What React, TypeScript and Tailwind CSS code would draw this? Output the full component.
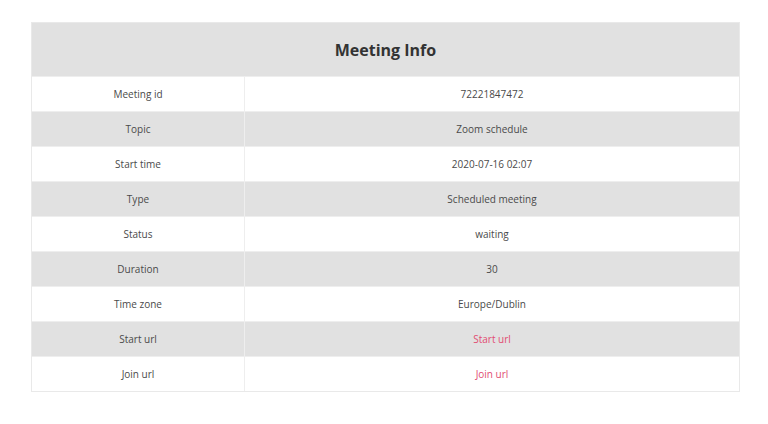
const rows: { label: string; value: string; link?: boolean }[] = [
  { label: "Meeting id", value: "72221847472" },
  { label: "Topic", value: "Zoom schedule" },
  { label: "Start time", value: "2020-07-16 02:07" },
  { label: "Type", value: "Scheduled meeting" },
  { label: "Status", value: "waiting" },
  { label: "Duration", value: "30" },
  { label: "Time zone", value: "Europe/Dublin" },
  { label: "Start url", value: "Start url", link: true },
  { label: "Join url", value: "Join url", link: true },
];

export default function App() {
  return (
    <div
      className="min-h-[424px] bg-white pt-[22px] pl-[31px]"
      style={{ fontFamily: '"Open Sans", "Noto Sans", sans-serif' }}
    >
      <div className="w-[709px] border border-[#e9e9e9] text-[10px] text-[#4a4a4a]">
        <div className="flex h-[53px] items-center justify-center bg-[#e1e1e1]">
          <h1 className="text-[16px] font-bold text-[#333]">Meeting Info</h1>
        </div>
        {rows.map((r, i) => (
          <div
            key={r.label}
            className={`flex h-[35px] border-t border-[#eeeeee] ${
              i % 2 === 1 ? "bg-[#e1e1e1]" : "bg-white"
            }`}
          >
            <div className="flex w-[213px] items-center justify-center border-r border-[#eeeeee]">
              {r.label}
            </div>
            <div className="flex flex-1 items-center justify-center">
              {r.link ? (
                <a href="#" className="text-[#e14d73]">
                  {r.value}
                </a>
              ) : (
                r.value
              )}
            </div>
          </div>
        ))}
      </div>
    </div>
  );
}
